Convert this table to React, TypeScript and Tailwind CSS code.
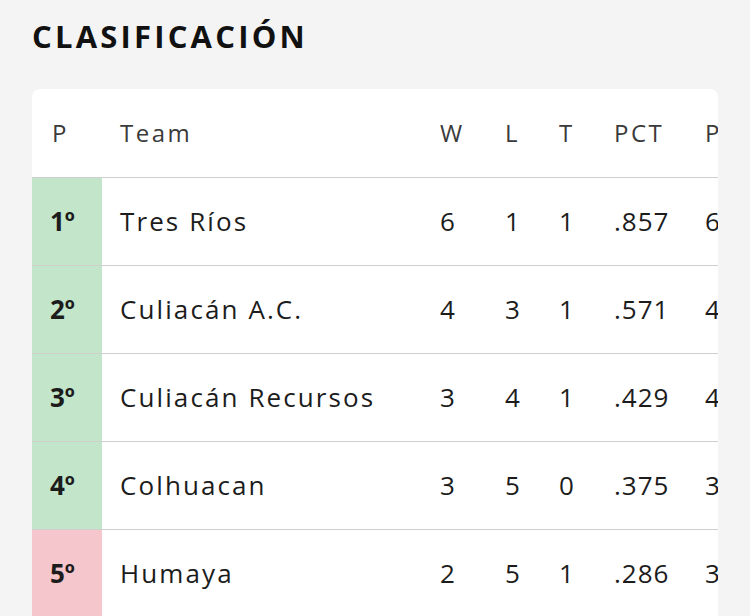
const STANDINGS = [
  { pos: "1º", team: "Tres Ríos", w: 6, l: 1, t: 1, pct: ".857", pf: 64, zone: "up" },
  { pos: "2º", team: "Culiacán A.C.", w: 4, l: 3, t: 1, pct: ".571", pf: 41, zone: "up" },
  { pos: "3º", team: "Culiacán Recursos", w: 3, l: 4, t: 1, pct: ".429", pf: 45, zone: "up" },
  { pos: "4º", team: "Colhuacan", w: 3, l: 5, t: 0, pct: ".375", pf: 38, zone: "up" },
  { pos: "5º", team: "Humaya", w: 2, l: 5, t: 1, pct: ".286", pf: 33, zone: "down" },
];

const font = { fontFamily: '"Open Sans", "Liberation Sans", sans-serif' };

export default function App() {
  return (
    <div className="min-h-screen bg-[#f4f4f4] pl-[32px]" style={font}>
      <h1 className="pt-[16px] text-[31px] leading-[40px] font-bold text-[#111] tracking-[3.2px]">
        CLASIFICACIÓN
      </h1>

      <div className="mt-[33px] w-[686px] overflow-hidden rounded-t-lg bg-white">
        <div className="w-[800px]">
          {/* Header */}
          <div className="flex h-[88px] items-center text-[24px] tracking-[2.5px] text-[#3a3a3a]">
            <div className="w-[70px] pl-[20px]">P</div>
            <div className="w-[320px] pl-[18px]">Team</div>
            <div className="w-[65px] pl-[18px]">W</div>
            <div className="w-[54px] pl-[18px]">L</div>
            <div className="w-[55px] pl-[18px]">T</div>
            <div className="w-[93px] pl-[18px]">PCT</div>
            <div className="w-[80px] pl-[16px]">PF</div>
          </div>

          {/* Rows */}
          {STANDINGS.map((row) => (
            <div
              key={row.team}
              className="flex h-[88px] border-t border-[#cfcfcf] text-[26px] text-[#1c1c1c]"
            >
              <div
                className={
                  row.zone === "up"
                    ? "flex w-[70px] items-center bg-[#c3e6cb] pl-[18px] font-bold"
                    : "flex w-[70px] items-center bg-[#f5c6cb] pl-[18px] font-bold"
                }
              >
                {row.pos}
              </div>
              <div className="flex w-[320px] items-center pl-[18px] tracking-[2.1px]">{row.team}</div>
              <div className="flex w-[65px] items-center pl-[18px]">{row.w}</div>
              <div className="flex w-[54px] items-center pl-[18px]">{row.l}</div>
              <div className="flex w-[55px] items-center pl-[18px]">{row.t}</div>
              <div className="flex w-[93px] items-center pl-[18px] tracking-[1px]">{row.pct}</div>
              <div className="flex w-[80px] items-center pl-[16px]">{row.pf}</div>
            </div>
          ))}
        </div>
      </div>
    </div>
  );
}
